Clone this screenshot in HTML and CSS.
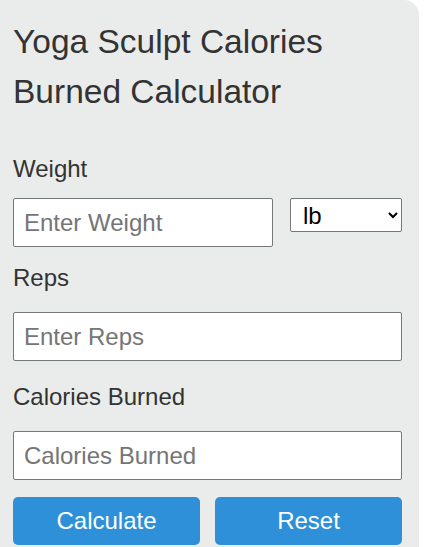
FILE: index.html
```html
<!doctype html>
<html lang="en">
  <head>
    <meta charset="UTF-8" />
    <meta name="viewport" content="width=device-width, initial-scale=1.0" />
    <title>Yoga Sculpt Calories Burned Calculator</title>
    <link rel="stylesheet" href="styles.css">
  </head>

  <body>
    <div class="calculator">
      <h1 class="calculator-title">Yoga Sculpt Calories Burned Calculator</h1>

      <label class="field-label field-label-first" for="weight">Weight</label>
      <div class="weight-row">
        <input class="field-input weight-input" id="weight" type="text" placeholder="Enter Weight" />
        <select class="unit-select" id="unit">
          <option>lb</option>
          <option>kg</option>
        </select>
      </div>

      <label class="field-label" for="reps">Reps</label>
      <input class="field-input" id="reps" type="text" placeholder="Enter Reps" />

      <label class="field-label" for="calories">Calories Burned</label>
      <input class="field-input" id="calories" type="text" placeholder="Calories Burned" readonly />

      <div class="buttons">
        <button class="button" type="button">Calculate</button>
        <button class="button" type="button">Reset</button>
      </div>
    </div>
  </body>
</html>
```

FILE: styles.css
```css
html,
body {
  padding: 0;
  margin: 0;
  background-color: #fff;
}

body {
  font-family: "Liberation Sans", Arial, sans-serif;
  color: #333;
}

.calculator {
  width: 419px;
  box-sizing: border-box;
  padding: 17px 17px 20px 13px;
  background-color: #eaeceb;
  border-top-right-radius: 15px;
}

.calculator-title {
  margin: 0;
  font-size: 33.5px;
  font-weight: normal;
  line-height: 49.5px;
}

.field-label {
  display: block;
  margin: 13px 0 16px;
  font-size: 24px;
  line-height: 36px;
}

.field-label-first {
  margin-top: 35px;
  margin-bottom: 11px;
}

.field-input {
  display: block;
  width: 100%;
  height: 49px;
  box-sizing: border-box;
  margin: 0;
  padding: 0 10px;
  font-family: inherit;
  font-size: 24px;
  color: #333;
  background-color: #fff;
  border: 1px solid #777;
  border-radius: 2px;
}

.field-input::placeholder {
  color: #757575;
}

.field-input + .field-label {
  margin-top: 18px;
}

.weight-row {
  display: flex;
  align-items: flex-start;
  justify-content: space-between;
}

.weight-input {
  width: 260px;
}

.unit-select {
  width: 112px;
  height: 34px;
  margin: 0;
  padding: 0 4px 0 8px;
  font-family: inherit;
  font-size: 24px;
  color: #000;
  background-color: #fff;
  border: 1px solid #777;
  border-radius: 2px;
}

.buttons {
  display: flex;
  gap: 15px;
  margin-top: 17px;
}

.button {
  flex: 1;
  height: 48px;
  padding: 0;
  font-family: inherit;
  font-size: 24px;
  color: #fff;
  background-color: #2d90d8;
  border: none;
  border-radius: 5px;
  cursor: pointer;
}
```
